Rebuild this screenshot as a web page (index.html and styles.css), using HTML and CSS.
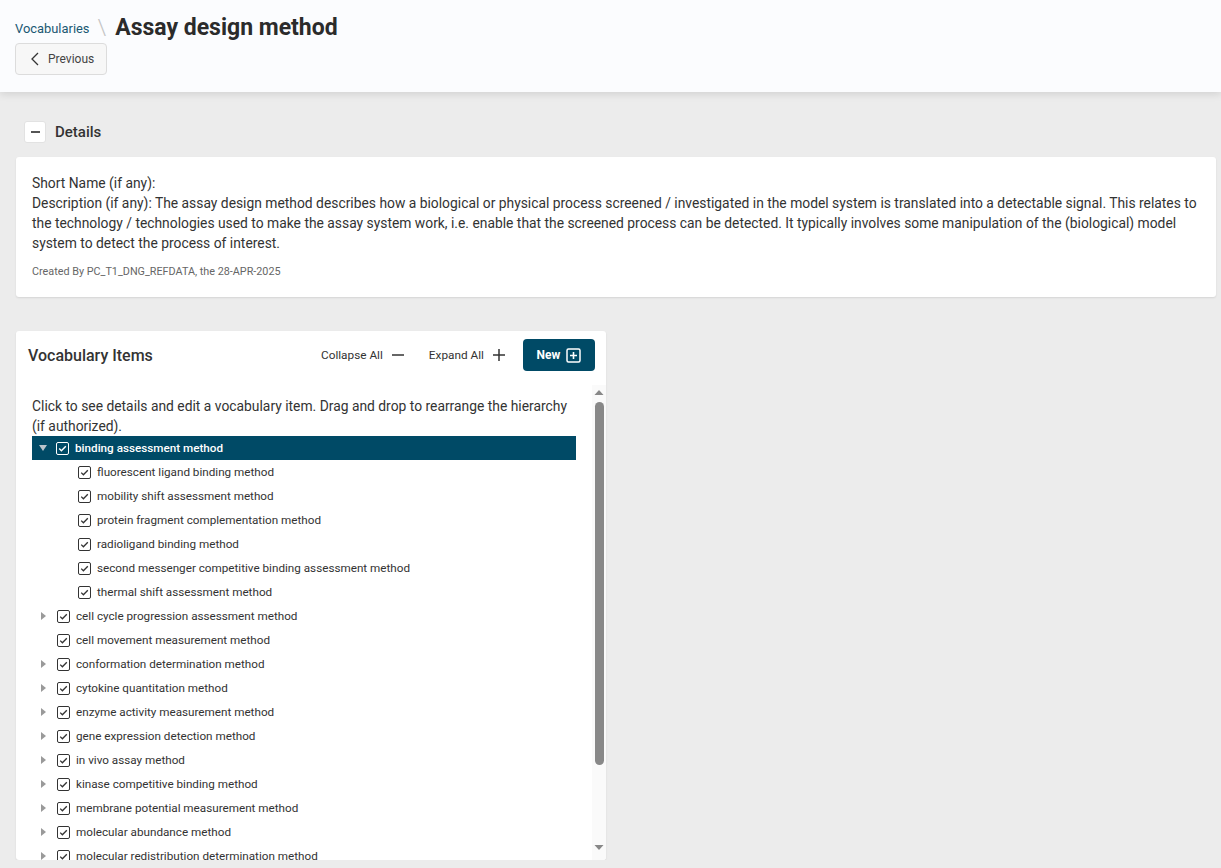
FILE: index.html
```html
<!DOCTYPE html>
<html>
<head>
    <title>Assay design method</title>
    <link rel="stylesheet" href="styles.css">
</head>
<body>
    <div class="page-header">
        <div class="crumbs">
            <a class="crumb-link" href="#">Vocabularies</a>
            <span class="crumb-sep">\</span>
            <h1>Assay design method</h1>
        </div>
        <button class="btn-prev">
            <svg width="14" height="14" viewBox="0 0 14 14"><path d="M10 1 L4 7 L10 13" fill="none" stroke="#333" stroke-width="1.3"/></svg>
            Previous
        </button>
    </div>

    <div class="main">
        <div class="section-toggle">
            <button class="toggle-btn"><span class="minus"></span></button>
            <span class="section-title">Details</span>
        </div>
        <div class="details-card">
            <div class="details-text">Short Name (if any):<br>Description (if any): The assay design method describes how a biological or physical process screened / investigated in the model system is translated into a detectable signal. This relates to the technology / technologies used to make the assay system work, i.e. enable that the screened process can be detected. It typically involves some manipulation of the (biological) model system to detect the process of interest.</div>
            <div class="created">Created By PC_T1_DNG_REFDATA, the 28-APR-2025</div>
        </div>

        <div class="vocab-card">
            <div class="vocab-head">
                <span class="vocab-title">Vocabulary Items</span>
                <div class="vocab-actions">
                    <span class="action">Collapse All
                        <svg width="14" height="14" viewBox="0 0 14 14"><path d="M1 7 H13" stroke="#333" stroke-width="1.5"/></svg>
                    </span>
                    <span class="action">Expand All
                        <svg width="14" height="14" viewBox="0 0 14 14"><path d="M1 7 H13 M7 1 V13" stroke="#333" stroke-width="1.5"/></svg>
                    </span>
                    <button class="btn-new">New
                        <svg width="15" height="15" viewBox="0 0 15 15"><rect x="1" y="1" width="13" height="13" rx="1.5" fill="none" stroke="#fff" stroke-width="1.5"/><path d="M7.5 4 V11 M4 7.5 H11" stroke="#fff" stroke-width="1.6"/></svg>
                    </button>
                </div>
            </div>
            <div class="vocab-body">
                <div class="vocab-scroll">
                    <p class="intro">Click to see details and edit a vocabulary item. Drag and drop to rearrange the hierarchy (if authorized).</p>
                    <ul class="tree">
                        <li class="row selected"><span class="caret open"></span><span class="check"></span>binding assessment method</li>
                        <li class="row child"><span class="check"></span>fluorescent ligand binding method</li>
                        <li class="row child"><span class="check"></span>mobility shift assessment method</li>
                        <li class="row child"><span class="check"></span>protein fragment complementation method</li>
                        <li class="row child"><span class="check"></span>radioligand binding method</li>
                        <li class="row child"><span class="check"></span>second messenger competitive binding assessment method</li>
                        <li class="row child"><span class="check"></span>thermal shift assessment method</li>
                        <li class="row"><span class="caret"></span><span class="check"></span>cell cycle progression assessment method</li>
                        <li class="row"><span class="caret none"></span><span class="check"></span>cell movement measurement method</li>
                        <li class="row"><span class="caret"></span><span class="check"></span>conformation determination method</li>
                        <li class="row"><span class="caret"></span><span class="check"></span>cytokine quantitation method</li>
                        <li class="row"><span class="caret"></span><span class="check"></span>enzyme activity measurement method</li>
                        <li class="row"><span class="caret"></span><span class="check"></span>gene expression detection method</li>
                        <li class="row"><span class="caret"></span><span class="check"></span>in vivo assay method</li>
                        <li class="row"><span class="caret"></span><span class="check"></span>kinase competitive binding method</li>
                        <li class="row"><span class="caret"></span><span class="check"></span>membrane potential measurement method</li>
                        <li class="row"><span class="caret"></span><span class="check"></span>molecular abundance method</li>
                        <li class="row"><span class="caret"></span><span class="check"></span>molecular redistribution determination method</li>
                        <li class="row"><span class="caret"></span><span class="check"></span>phenotypic observation method</li>
                        <li class="row"><span class="caret"></span><span class="check"></span>protein-protein interaction method</li>
                    </ul>
                </div>
                <div class="scrollbar">
                    <svg class="arrow" width="14" height="14" viewBox="0 0 14 14"><path d="M2.5 10 L7 5 L11.5 10 Z" fill="#888"/></svg>
                    <div class="thumb"></div>
                    <div class="track-rest"></div>
                    <svg class="arrow" width="14" height="14" viewBox="0 0 14 14"><path d="M2.5 4 L7 9 L11.5 4 Z" fill="#888"/></svg>
                </div>
            </div>
        </div>
    </div>
</body>
</html>
```

FILE: styles.css
```css
body{
    margin: 0;
    background: #ececec;
    font-family: Roboto, "Noto Sans", sans-serif;
    color: #333;
}
.page-header{
    box-sizing: border-box;
    height: 92px;
    padding: 12px 15px 0 15px;
    background: #fbfcfe;
    box-shadow: 0 2px 8px rgba(0, 0, 0, 0.12);
    position: relative;
}
.crumbs{
    display: flex;
    align-items: center;
    height: 30px;
}
.crumb-link{
    font-size: 12.9px;
    color: #1a5872;
    text-decoration: none;
    margin-top: 2px;
}
.crumb-sep{
    font-size: 22px;
    color: #c4c4c4;
    margin: 0 9px 0 8px;
    font-weight: 300;
}
h1{
    margin: 0;
    font-size: 23px;
    font-weight: 700;
    color: #2b2b2b;
}
.btn-prev{
    margin-top: 1px;
    display: flex;
    align-items: center;
    gap: 6px;
    height: 32px;
    padding: 0 12px 0 12px;
    background: #f7f7f7;
    border: 1px solid #dcdcdc;
    border-radius: 4px;
    font-family: inherit;
    font-size: 12px;
    color: #444;
}
.main{
    padding: 0 5px 0 16px;
}
.section-toggle{
    display: flex;
    align-items: center;
    gap: 9px;
    margin-top: 29px;
    padding-left: 8px;
}
.toggle-btn{
    width: 22px;
    height: 22px;
    background: #fff;
    border: 1px solid #e2e2e2;
    border-radius: 3px;
    padding: 0;
    display: flex;
    align-items: center;
    justify-content: center;
}
.minus{
    width: 9px;
    height: 2px;
    background: #555;
}
.section-title{
    font-size: 15px;
    font-weight: 500;
    color: #333;
}
.details-card{
    box-sizing: border-box;
    margin-top: 14px;
    height: 140px;
    background: #fff;
    border-radius: 3px;
    box-shadow: 0 1px 2px rgba(0, 0, 0, 0.1);
    padding: 16px 16px 0 16px;
}
.details-text{
    font-size: 13.85px;
    line-height: 20px;
    color: #333;
}
.created{
    margin-top: 11px;
    font-size: 10.8px;
    line-height: 16px;
    color: #666;
}
.vocab-card{
    margin-top: 34px;
    width: 590px;
    height: 529px;
    background: #fff;
    border-radius: 3px;
    box-shadow: 0 1px 2px rgba(0, 0, 0, 0.1);
    display: flex;
    flex-direction: column;
    overflow: hidden;
}
.vocab-head{
    display: flex;
    align-items: center;
    justify-content: space-between;
    height: 32px;
    padding: 8px 11px 14px 12px;
}
.vocab-title{
    font-size: 16px;
    font-weight: 500;
    color: #333;
}
.vocab-actions{
    display: flex;
    align-items: center;
}
.action{
    display: flex;
    align-items: center;
    gap: 8px;
    font-size: 11.8px;
    color: #333;
    margin-right: 17px;
}
.action:first-child{
    margin-right: 24px;
}
.btn-new{
    display: flex;
    align-items: center;
    gap: 6px;
    height: 32px;
    width: 72px;
    justify-content: center;
    background: #004a66;
    color: #fff;
    border: none;
    border-radius: 4px;
    font-family: inherit;
    font-size: 12px;
    font-weight: 700;
}
.vocab-body{
    flex: 1;
    display: flex;
    min-height: 0;
}
.vocab-scroll{
    flex: 1;
    overflow: hidden;
    padding: 11px 16px 0 4px;
    margin-left: 12px;
}
.scrollbar{
    width: 14px;
    background: #fafafa;
    display: flex;
    flex-direction: column;
    align-items: center;
}
.arrow{
    flex: none;
}
.thumb{
    margin-top: 3px;
    width: 9px;
    height: 363px;
    border-radius: 5px;
    background: #888;
}
.track-rest{
    flex: 1;
}
.arrow:last-child{
    margin-bottom: 5px;
}
.intro{
    margin: 0;
    font-size: 13.85px;
    line-height: 20px;
}
.tree{
    list-style: none;
    margin: 0;
    padding: 0;
}
.row{
    display: flex;
    align-items: center;
    height: 24px;
    font-size: 11.7px;
    color: #333;
    white-space: nowrap;
}
.row.selected{
    background: #004a66;
    color: #fff;
    font-weight: 500;
}
.row.child{
    padding-left: 46px;
}
.caret{
    width: 0;
    height: 0;
    margin: 0 11px 0 9px;
    border-top: 4px solid transparent;
    border-bottom: 4px solid transparent;
    border-left: 5px solid #9a9a9a;
}
.caret.open{
    margin: 0 9px 0 7px;
    border-left: 4.5px solid transparent;
    border-right: 4.5px solid transparent;
    border-top: 6px solid #b9c4cc;
    border-bottom: none;
}
.caret.none{
    border-left-color: transparent;
}
.check{
    box-sizing: border-box;
    width: 13px;
    height: 13px;
    border: 1px solid #333;
    border-radius: 2px;
    margin-right: 6px;
    background: url("data:image/svg+xml,%3Csvg xmlns='http://www.w3.org/2000/svg' width='11' height='11'%3E%3Cpath d='M2.2 5.6 L4.4 7.8 L8.8 3.2' fill='none' stroke='%23333' stroke-width='1.3'/%3E%3C/svg%3E") no-repeat center;
}
.selected .check{
    border-color: #fff;
    background-image: url("data:image/svg+xml,%3Csvg xmlns='http://www.w3.org/2000/svg' width='11' height='11'%3E%3Cpath d='M2.2 5.6 L4.4 7.8 L8.8 3.2' fill='none' stroke='%23fff' stroke-width='1.4'/%3E%3C/svg%3E");
}
```
